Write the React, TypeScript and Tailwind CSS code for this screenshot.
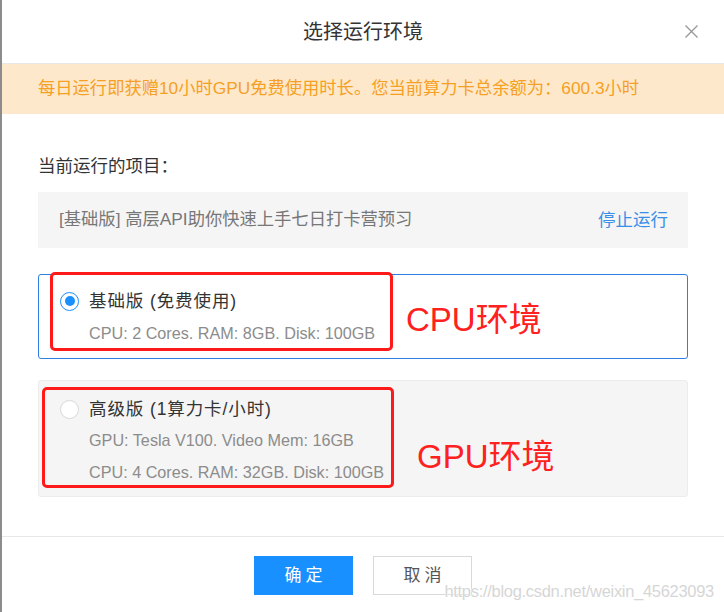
import React, { useState } from 'react';

const font = { fontFamily: "'Liberation Sans', 'Noto Sans CJK SC', sans-serif" };

const Radio: React.FC<{ checked: boolean }> = ({ checked }) => (
  <span
    className={`flex items-center justify-center w-[19px] h-[19px] rounded-full border bg-white shrink-0 ${checked ? 'border-[#1890ff]' : 'border-[#d9d9d9]'}`}
  >
    {checked && <span className="w-[10px] h-[10px] rounded-full bg-[#1890ff]" />}
  </span>
);

const App: React.FC = () => {
  const [plan, setPlan] = useState<'basic' | 'pro'>('basic');

  return (
    <div className="w-[724px] h-[612px] overflow-hidden bg-white border-l-2 border-[#8c8c8c] flex flex-col relative" style={font}>
      {/* Header */}
      <div className="h-[64px] shrink-0 border-b border-[#e8e8e8] flex items-center justify-center relative">
        <h2 className="text-[20px] text-[#333]">选择运行环境</h2>
        <button className="absolute right-[25px] top-[24px] text-[#999]">
          <svg width="15" height="15" viewBox="0 0 15 15" fill="none" stroke="currentColor" strokeWidth="1.4">
            <path d="M1.5 1.5 L13.5 13.5 M13.5 1.5 L1.5 13.5" />
          </svg>
        </button>
      </div>

      {/* Notice */}
      <div className="h-[50px] shrink-0 bg-[#fee8cb] flex items-center pl-[36px] text-[17.3px] text-[#f5a024]">
        每日运行即获赠10小时GPU免费使用时长。您当前算力卡总余额为：600.3小时
      </div>

      {/* Body */}
      <div className="pl-[36px] pr-[36px] pt-[40px] pb-[39px] flex flex-col">
        <div className="text-[17.5px] leading-6 text-[#333]">当前运行的项目：</div>

        <div className="mt-[14px] h-[56px] bg-[#f5f5f5] flex items-center justify-between pl-[21px] pr-[20px] text-[17.3px]">
          <span className="text-[#777]">[基础版] 高层API助你快速上手七日打卡营预习</span>
          <button className="text-[#3a8ee6] text-[17.5px]">停止运行</button>
        </div>

        {/* Basic */}
        <div
          onClick={() => setPlan('basic')}
          className={`mt-[26px] relative rounded-[3px] border pl-[21px] pt-[14px] pb-[13px] cursor-pointer ${plan === 'basic' ? 'border-[#2e7fe2] bg-white' : 'border-[#ececec] bg-[#f5f5f5]'}`}
        >
          <div className="flex items-center gap-[10px] h-6">
            <Radio checked={plan === 'basic'} />
            <span className="text-[17.5px] tracking-[0.9px] text-[#333]">基础版 (免费使用)</span>
          </div>
          <div className="pl-[29px] mt-[8px] flex flex-col gap-[8px] text-[16.2px] leading-6 text-[#8c8c8c]">
            <span>CPU: 2 Cores. RAM: 8GB. Disk: 100GB</span>
          </div>
          {/* annotation */}
          <div className="absolute left-[11px] top-[-3px] w-[343px] h-[79px] border-[3px] border-[#ff1a1a] rounded-[5px] pointer-events-none" />
          <span className="absolute left-[367px] top-[25px] text-[33px] leading-10 text-[#ff2020]">CPU环境</span>
        </div>

        {/* Pro */}
        <div
          onClick={() => setPlan('pro')}
          className={`mt-[21px] relative rounded-[3px] border pl-[21px] pt-[16px] pb-[12px] cursor-pointer ${plan === 'pro' ? 'border-[#2e7fe2] bg-white' : 'border-[#ececec] bg-[#f5f5f5]'}`}
        >
          <div className="flex items-center gap-[10px] h-6">
            <Radio checked={plan === 'pro'} />
            <span className="text-[17.5px] tracking-[0.9px] text-[#333]">高级版 (1算力卡/小时)</span>
          </div>
          <div className="pl-[29px] mt-[7px] flex flex-col gap-[8px] text-[16.2px] leading-6 text-[#8c8c8c]">
            <span>GPU: Tesla V100. Video Mem: 16GB</span>
            <span>CPU: 4 Cores. RAM: 32GB. Disk: 100GB</span>
          </div>
          {/* annotation */}
          <div className="absolute left-[3px] top-[6px] w-[352px] h-[101px] border-[3px] border-[#ff1a1a] rounded-[5px] pointer-events-none" />
          <span className="absolute left-[378px] top-[56px] text-[33px] leading-10 text-[#ff2020]">GPU环境</span>
        </div>
      </div>

      {/* Footer */}
      <div className="border-t border-[#e8e8e8] pt-[19px] flex justify-center gap-[20px]">
        <button className="w-[99px] h-[39px] bg-[#1890ff] text-white text-[17px] tracking-[4px] pl-[4px]">确定</button>
        <button className="w-[99px] h-[39px] bg-white border border-[#d9d9d9] text-[#555] text-[17px] tracking-[4px] pl-[4px]">取消</button>
      </div>

      {/* watermark */}
      <span
        className="absolute right-[10px] bottom-[8px] text-[16.5px] text-[#d6d6d6] tracking-[-0.3px]"
        style={{ textShadow: '0 0 1px #fff, 0 0 2px #fff' }}
      >
        https://blog.csdn.net/weixin_45623093
      </span>
    </div>
  );
};

export default App;
